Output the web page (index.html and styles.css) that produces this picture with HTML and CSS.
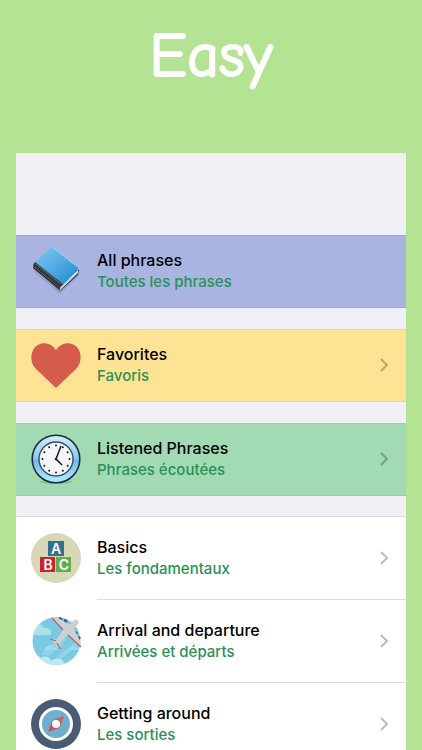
FILE: index.html
```html
<!DOCTYPE html>
<html lang="en">
<head>
<meta charset="utf-8">
<meta name="viewport" content="width=device-width, initial-scale=1">
<title>Easy</title>
<link rel="stylesheet" href="styles.css">
</head>
<body>
<h1 class="headline">Easy</h1>
<main class="screen">
  <a class="row single blue" href="#all">
    <svg class="icon" viewBox="0 0 50 50" aria-hidden="true">
      <defs>
        <linearGradient id="cover" x1="0" y1="0" x2="1" y2="1"><stop offset="0" stop-color="#7cc8f0"/><stop offset=".45" stop-color="#55aee3"/><stop offset="1" stop-color="#1587d0"/></linearGradient>
      </defs>
      <path d="M3 22 29 42 48 25 48 29 29 48 3 26Z" fill="#8190b5" opacity=".5"/>
      <path d="M3 17 2 22 29 45 47 29 48 24Z" fill="#30435b"/>
      <path d="M4 20 29 41 47 24 47 27 29 44 3 23Z" fill="#eef4f8"/>
      <path d="M5 22 29 42 47 26" fill="none" stroke="#9cabb8" stroke-width=".7"/>
      <path d="M21 1 48 22 31 40 4 16Z" fill="url(#cover)"/>
      <path d="M21 1 48 22" stroke="#92d6f5"/>
      <path d="M4 16 32 38 29 42 2 20Z" fill="#34363b"/>
      <path d="M5 18 30 38" stroke="#5c6067" stroke-width="1.2"/>
      <path d="M3 22 29 43" stroke="#17191d" stroke-width="1.5"/>
    </svg>
    <span class="text"><span class="title">All phrases</span><span class="subtitle">Toutes les phrases</span></span>
  </a>
  <a class="row single yellow" href="#favorites">
    <svg class="icon" viewBox="0 0 50 50" aria-hidden="true">
      <path d="M25 48 5 29C-1 23-1 13 4 7 10 1 20 2 25 10 30 2 40 1 46 7 51 13 51 23 45 29Z" fill="#d55b4b"/>
    </svg>
    <span class="text"><span class="title">Favorites</span><span class="subtitle">Favoris</span></span>
    <svg class="chevron" viewBox="0 0 9 14" aria-hidden="true"><path d="M1 1 7 7 1 13"/></svg>
  </a>
  <a class="row single green" href="#listened">
    <svg class="icon" viewBox="0 0 50 50" aria-hidden="true">
      <defs>
        <linearGradient id="rim" x1="0" y1="0" x2="0" y2="1"><stop offset="0" stop-color="#d3effc"/><stop offset=".48" stop-color="#8cc9ef"/><stop offset=".52" stop-color="#70b9ea"/><stop offset="1" stop-color="#b7edff"/></linearGradient>
      </defs>
      <ellipse cx="25" cy="48" rx="16" ry="2" fill="#76ad8c" opacity=".5"/>
      <circle cx="25" cy="25" r="23.8" fill="url(#rim)" stroke="#1c2f42" stroke-width="1.6"/>
      <circle cx="25" cy="25" r="17" fill="#f3f5f9" stroke="#31516c" stroke-width="1.4"/>
      <g fill="#111a24">
        <circle cx="25" cy="11.5" r="1"/><circle cx="31.8" cy="13.3" r="1"/><circle cx="36.7" cy="18.2" r="1"/><circle cx="38.5" cy="25" r="1"/><circle cx="36.7" cy="31.8" r="1"/><circle cx="31.8" cy="36.7" r="1"/><circle cx="25" cy="38.5" r="1"/><circle cx="18.2" cy="36.7" r="1"/><circle cx="13.3" cy="31.8" r="1"/><circle cx="11.5" cy="25" r="1"/><circle cx="13.3" cy="18.2" r="1"/><circle cx="18.2" cy="13.3" r="1"/>
      </g>
      <path d="M30 12 25 25 31 31" fill="none" stroke="#111a24" stroke-width="1.5"/>
      <circle cx="25" cy="25" r="1.3" fill="#111a24"/>
    </svg>
    <span class="text"><span class="title">Listened Phrases</span><span class="subtitle">Phrases écoutées</span></span>
    <svg class="chevron" viewBox="0 0 9 14" aria-hidden="true"><path d="M1 1 7 7 1 13"/></svg>
  </a>
  <nav class="topics" aria-label="Topics">
    <a class="row" href="#basics">
      <svg class="icon" viewBox="0 0 50 50" aria-hidden="true">
        <circle cx="25" cy="25" r="25" fill="#d6d8b8"/>
        <path d="M17 8h16v15H17z" fill="#35708b"/>
        <path d="M9 24h15v15H9z" fill="#cb2431"/>
        <path d="M25 24h15v15H25z" fill="#62af46"/>
        <g class="letters"><text x="25" y="21">A</text><text x="17" y="37">B</text><text x="33" y="37">C</text></g>
      </svg>
      <span class="text"><span class="title">Basics</span><span class="subtitle">Les fondamentaux</span></span>
      <svg class="chevron" viewBox="0 0 9 14" aria-hidden="true"><path d="M1 1 7 7 1 13"/></svg>
    </a>
    <a class="row" href="#arrival">
      <svg class="icon" viewBox="0 0 50 50" aria-hidden="true">
        <defs><clipPath id="sky"><circle cx="25.5" cy="25" r="24"/></clipPath></defs>
        <g clip-path="url(#sky)">
          <path d="M0 0h50v50H0z" fill="#7bcae3"/>
          <path d="M10 38 30 20 36 23 18 40ZM25 41 45 26 47 29 30 43Z" fill="#91d4e9"/>
          <path d="M0 19V10C6 6 12 9 13 12 18 11 21 15 20 19Z" fill="#abe0ed"/>
          <path d="M0 50V37C4 40 8 38 10 42 14 39 19 41 20 45 26 40 33 42 34 50Z" fill="#bce8f1"/>
          <path d="M13 34C14 31 16 31 18 29 21 28 23 30 23 32 26 32 27 33 27 34ZM38 34C39 30 43 32 50 31V34Z" fill="#a0dbea"/>
        </g>
        <path d="M28 2 31 4M33 4 36 6M44 16 46 18M47 21 49 23" stroke="#46617b" stroke-width="3"/>
        <path d="M21 1 27 2 39 9 42 5C45 2 49 5 47 8L43 13 49 25 50 31 37 19 29 26 31 33 25 28 19 23 26 23 32 14Z" fill="#ccd0d2"/>
        <path d="M21 2 32 14M37 19 50 31M19 23 25 25M26 27 30 33" fill="none" stroke="#cd5960" stroke-width="1.3"/>
      </svg>
      <span class="text"><span class="title">Arrival and departure</span><span class="subtitle">Arrivées et départs</span></span>
      <svg class="chevron" viewBox="0 0 9 14" aria-hidden="true"><path d="M1 1 7 7 1 13"/></svg>
    </a>
    <a class="row" href="#around">
      <svg class="icon" viewBox="0 0 50 50" aria-hidden="true">
        <circle cx="25" cy="25" r="25" fill="#4b5b73"/>
        <circle cx="25" cy="25" r="15.5" fill="#6eafcf" stroke="#fff" stroke-width="3"/>
        <path d="M33 17 29 28 22 21Z" fill="#d85c55"/>
        <path d="M17 33 21 22 28 29Z" fill="#cb5054"/>
        <circle cx="25" cy="25" r="4" fill="#fff"/>
      </svg>
      <span class="text"><span class="title">Getting around</span><span class="subtitle">Les sorties</span></span>
      <svg class="chevron" viewBox="0 0 9 14" aria-hidden="true"><path d="M1 1 7 7 1 13"/></svg>
    </a>
  </nav>
</main>
</body>
</html>
```
FILE: styles.css
```css
* {
  box-sizing: border-box;
}

body {
  margin: 0;
  height: 100vh;
  overflow: hidden;
  padding: 0 16px;
  background: #b5e394;
  font-family: Inter, "Liberation Sans", sans-serif;
}

.headline {
  margin: 0;
  padding: 16px 0 57px;
  color: #fff;
  font-family: "Comic Sans MS", "Comic Neue", Lato, sans-serif;
  font-size: 62px;
  font-weight: 400;
  line-height: 80px;
  text-align: center;
  -webkit-text-stroke: 2px #fff;
  stroke-linejoin: round;
}

.screen {
  display: flex;
  flex-direction: column;
  gap: 21px;
  padding-top: 82px;
  background: #f1f0f7;
}

.row {
  display: flex;
  align-items: center;
  gap: 16px;
  min-height: 83px;
  padding: 0 17px 2px 15px;
  color: #000;
  text-decoration: none;
}

.single {
  min-height: 73px;
  border: solid #0000000f;
  border-width: 1px 0;
}

.blue {
  background: #a9b4e1;
}

.yellow {
  background: #ffe394;
}

.green {
  background: #a2dab4;
}

.topics {
  background: #fff;
  box-shadow: 0 -1px #dddde2;
}

.topics .row:not(:last-child) {
  background: linear-gradient(#dddde0, #dddde0) 81px 100% / 100% 1px no-repeat;
}

.icon {
  flex: none;
  width: 50px;
  height: 50px;
  overflow: visible;
}

.text {
  display: flex;
  flex: 1;
  flex-direction: column;
}

.title {
  font-size: 16px;
  font-weight: 500;
  line-height: 22px;
}

.subtitle {
  color: #299158;
  font-size: 15px;
  font-weight: 500;
  line-height: 21px;
}

.chevron {
  width: 9px;
  height: 14px;
  fill: none;
  stroke: #000;
  stroke-opacity: 0.27;
  stroke-width: 2;
}

.letters {
  fill: #fff;
  font-size: 14px;
  font-weight: 600;
  text-anchor: middle;
}
```
